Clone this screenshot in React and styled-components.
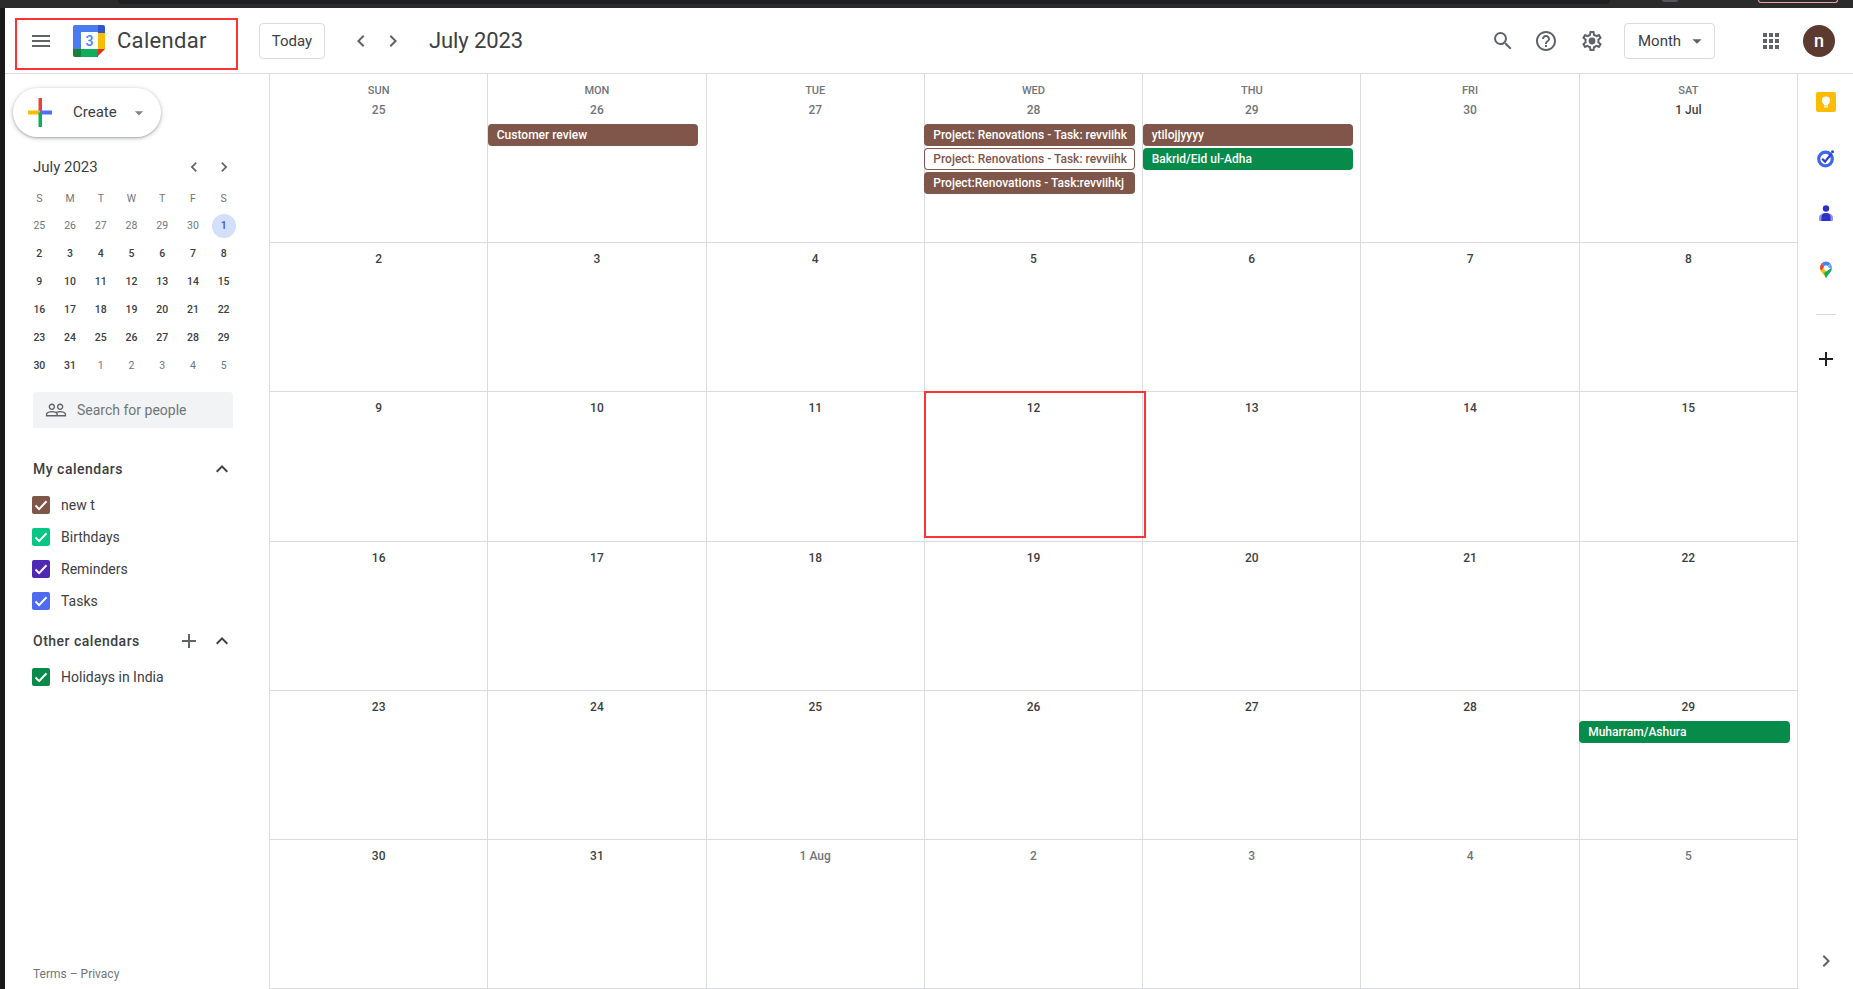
import React from 'react'
import styled, { createGlobalStyle } from 'styled-components'
import {
  MdMenu,
  MdChevronLeft,
  MdChevronRight,
  MdSearch,
  MdHelpOutline,
  MdApps,
  MdExpandLess,
  MdAdd,
  MdPeopleOutline,
  MdArrowDropDown,
} from 'react-icons/md'

const GlobalStyle = createGlobalStyle`
  html, body {
    margin: 0;
    padding: 0;
    height: 100%;
    background: #fff;
    overflow: hidden;
  }
  * { box-sizing: border-box; }
  body {
    font-family: Roboto, "Liberation Sans", sans-serif;
    color: #3c4043;
  }
`

const Page = styled.div`
  position: relative;
  width: 1853px;
  height: 989px;
  display: flex;
  flex-direction: column;
  overflow: hidden;
`

const TopStrip = styled.div`
  height: 8px;
  flex: none;
  background: #2b2b2b;
  display: flex;
  align-items: flex-start;
`

const StripTab = styled.div`
  margin-left: 118px;
  width: 1492px;
  height: 4px;
  background: #1f2022;
  border-radius: 0 0 8px 8px;
`

const StripDot = styled.div`
  margin-left: 52px;
  width: 16px;
  height: 2px;
  border-radius: 0 0 8px 8px;
  background: #55575a;
`

const StripPill = styled.div`
  margin-left: 80px;
  width: 80px;
  height: 3px;
  border: 1px solid #e8a0a0;
  border-top: none;
  border-radius: 0 0 6px 6px;
`

const Body = styled.div`
  flex: 1;
  min-height: 0;
  display: flex;
`

const LeftEdge = styled.div`
  width: 5px;
  flex: none;
  background: #1a1a1a;
`

const Main = styled.div`
  flex: 1;
  min-width: 0;
  display: flex;
  flex-direction: column;
`

const Header = styled.header`
  height: 66px;
  flex: none;
  border-bottom: 1px solid #dadce0;
  display: flex;
  align-items: center;
  padding: 0 18px 0 24px;
  color: #5f6368;
`

const Brand = styled.div`
  width: 230px;
  flex: none;
  display: flex;
  align-items: center;
`

const BrandName = styled.span`
  margin-left: 12px;
  font-size: 22px;
  letter-spacing: 0.3px;
  color: #3c4043;
`

const LogoWrap = styled.div`
  margin-left: 20px;
  width: 32px;
  height: 32px;
`

const OutlineButton = styled.div`
  height: 36px;
  border: 1px solid #dadce0;
  border-radius: 4px;
  display: flex;
  align-items: center;
  color: #3c4043;
`

const TodayButton = styled(OutlineButton)`
  width: 66px;
  padding-top: 1px;
  justify-content: center;
  font-size: 15px;
`

const MonthButton = styled(OutlineButton)`
  width: 91px;
  padding-left: 13px;
  gap: 5px;
  font-size: 15px;
`

const NavPair = styled.div`
  margin-left: 24px;
  display: flex;
  gap: 8px;
`

const MonthTitle = styled.div`
  margin-left: 24px;
  font-size: 22px;
  letter-spacing: -0.1px;
  color: #3c4043;
`

const HeaderRight = styled.div`
  margin-left: auto;
  display: flex;
  align-items: center;
  gap: 20px;
`

const HelpIcon = styled(MdHelpOutline)`
  margin: 0 2px 0 -1px;
`

const Apps = styled.div`
  margin-left: 24px;
  display: flex;
`

const Avatar = styled.div`
  width: 32px;
  height: 32px;
  border-radius: 50%;
  background: #5d3a2f;
  color: #fff;
  display: grid;
  place-items: center;
  font-size: 18px;
  font-weight: 500;
`

const Content = styled.div`
  flex: 1;
  min-height: 0;
  display: flex;
`

const Sidebar = styled.aside`
  width: 264px;
  flex: none;
  padding: 0 35px 0 28px;
  display: flex;
  flex-direction: column;
`

const CreateButton = styled.div`
  margin: 14px 0 0 -20px;
  width: 148px;
  height: 49px;
  flex: none;
  border-radius: 25px;
  background: #fff;
  box-shadow: 0 1px 2px rgba(60, 64, 67, 0.3), 0 1px 4px 1px rgba(60, 64, 67, 0.2);
  display: flex;
  align-items: center;
  padding-left: 15px;
  font-size: 15px;
  color: #3c4043;
`

const CreateLabel = styled.span`
  margin: 0 0 2px 21px;
`

const CreateCaret = styled.div`
  margin-left: 12px;
  display: flex;
  color: #80868b;
`

const MiniHead = styled.div`
  margin-top: 18px;
  height: 24px;
  flex: none;
  display: flex;
  align-items: center;
  justify-content: space-between;
`

const MiniTitle = styled.div`
  font-size: 15px;
  color: #3c4043;
`

const MiniNav = styled.div`
  display: flex;
  gap: 10px;
  color: #5f6368;
`

const MiniGrid = styled.div`
  margin: 6px -5px 0 -9px;
  display: grid;
  grid-template-columns: repeat(7, 1fr);
  grid-template-rows: 27px 27px;
  grid-auto-rows: 28px;
  flex: none;
`

const MiniCell = styled.div`
  display: grid;
  place-items: center;
  font-size: 10.5px;
  font-weight: ${(props) => (props.$muted ? 400 : 500)};
  color: ${(props) => (props.$today ? '#3b4fc4' : props.$muted ? '#70757a' : '#3c4043')};
`

const MiniToday = styled.span`
  width: 24px;
  height: 24px;
  border-radius: 50%;
  background: #d2e0fb;
  display: grid;
  place-items: center;
`

const PeopleSearch = styled.div`
  margin: 13px 1px 0 0;
  height: 36px;
  flex: none;
  background: #f1f3f4;
  border-radius: 4px 4px 0 0;
  display: flex;
  align-items: center;
  padding-left: 12px;
  gap: 10px;
  font-size: 14px;
  color: #70757a;
`

const SectionHead = styled.div`
  margin-top: ${(props) => props.$top}px;
  height: 24px;
  flex: none;
  display: flex;
  align-items: center;
  color: #3c4043;
`

const SectionTitle = styled.div`
  font-size: 14px;
  font-weight: 500;
  letter-spacing: 0.5px;
  margin-right: auto;
`

const SectionAdd = styled.div`
  display: flex;
  color: #5f6368;
  margin-right: 9px;
`

const CalendarList = styled.div`
  margin-top: 8px;
  flex: none;
`

const CalendarItem = styled.div`
  height: 32px;
  display: flex;
  align-items: center;
  gap: 11px;
  margin-left: -1px;
  font-size: 14px;
  color: #3c4043;
`

const Check = styled.span`
  width: 18px;
  height: 18px;
  border-radius: 2px;
  background: ${(props) => props.$color};
  display: grid;
  place-items: center;
`

const Terms = styled.div`
  margin-top: auto;
  padding-bottom: 7px;
  height: 23px;
  flex: none;
  font-size: 12px;
  line-height: 16px;
  color: #70757a;
`

const MonthGrid = styled.div`
  width: 1529px;
  flex: none;
  border-left: 1px solid #dadce0;
  display: grid;
  grid-template-columns: repeat(7, 1fr);
  grid-template-rows: 169px 149px 150px 149px 149px 149px;
`

const DayCell = styled.div`
  min-width: 0;
  border-right: 1px solid #dadce0;
  border-bottom: 1px solid #dadce0;
  padding-top: 8px;
  display: flex;
  flex-direction: column;
`

const DayName = styled.div`
  height: 16px;
  margin: 1px 0 3px;
  text-align: center;
  font-size: 11px;
  font-weight: 500;
  line-height: 16px;
  color: #70757a;
`

const DayNumber = styled.div`
  height: 16px;
  margin-bottom: 6px;
  text-align: center;
  font-size: 12px;
  font-weight: 500;
  line-height: 16px;
  color: ${(props) => (props.$muted ? '#70757a' : '#3c4043')};
`

const EventChip = styled.div`
  height: 22px;
  margin: 0 7.5px 2px -0.5px;
  padding-left: 9px;
  border-radius: 4px;
  font-size: 12px;
  font-weight: 500;
  line-height: 22px;
  white-space: nowrap;
  overflow: hidden;
  background: ${(props) => (props.$outlined ? '#fff' : props.$color)};
  color: ${(props) => (props.$outlined ? props.$color : '#fff')};
  box-shadow: ${(props) => (props.$outlined ? `inset 0 0 0 1px ${props.$color}` : 'none')};
`

const Rail = styled.aside`
  flex: 1;
  min-width: 0;
  padding: 18px 0 16px;
  display: flex;
  flex-direction: column;
  align-items: center;
`

const RailIcon = styled.div`
  width: 20px;
  height: 20px;
  margin-bottom: 36px;
`

const RailDivider = styled.div`
  width: 20px;
  height: 1px;
  margin: -2px 0 32px;
  background: #dadce0;
`

const RailPlus = styled.div`
  display: flex;
  color: #202124;
`

const RailCollapse = styled.div`
  margin-top: auto;
  display: flex;
  color: #5f6368;
`

/* the red boxes someone drew on the screenshot */
const Annotation = styled.div`
  position: absolute;
  left: ${(props) => props.$x}px;
  top: ${(props) => props.$y}px;
  width: ${(props) => props.$w}px;
  height: ${(props) => props.$h}px;
  border: 2px solid #ff3333;
  pointer-events: none;
`

const Logo = () => (
  <svg width="32" height="32" viewBox="0 0 32 32">
    <path d="M8 0h17v7H8z" fill="#4a7cf0" />
    <path d="M2 0h6v7H0V2a2 2 0 0 1 2-2z" fill="#4a7cf0" />
    <path d="M25 0h5a2 2 0 0 1 2 2v6h-7z" fill="#2f55c8" />
    <path d="M0 7h8v17H0z" fill="#4a7cf0" />
    <path d="M25 8h7v16h-7z" fill="#fbbc04" />
    <path d="M8 24h17v8H8z" fill="#0eaf5b" />
    <path d="M0 24h8v8H2a2 2 0 0 1-2-2z" fill="#188038" />
    <path d="M25 24h7l-8 8z" fill="#ea2b1f" />
    <rect x="8" y="7" width="17" height="17" fill="#fff" />
    <text x="16.5" y="21" textAnchor="middle" fontSize="14" fontWeight="500" fontFamily="Roboto, sans-serif" fill="#4285f4">3</text>
  </svg>
)

const CreatePlus = () => (
  <svg width="24" height="29" viewBox="0 0 24 29">
    <rect x="10.5" y="0" width="3.5" height="14.5" fill="#ea4335" />
    <rect x="0" y="12.5" width="12" height="4" fill="#fbbc04" />
    <rect x="12" y="12.5" width="12" height="4" fill="#4f6ff0" />
    <rect x="10.5" y="14.5" width="3.5" height="14.5" fill="#0eaf5b" />
  </svg>
)

const Gear = () => (
  <svg width="24" height="24" viewBox="0 0 24 24" fill="currentColor">
    <path d="M19.43 12.98c.04-.32.07-.64.07-.98 0-.34-.03-.66-.07-.98l2.11-1.65c.19-.15.24-.42.12-.64l-2-3.46c-.09-.16-.26-.25-.44-.25-.06 0-.12.01-.17.03l-2.49 1c-.52-.4-1.08-.73-1.69-.98l-.38-2.65C14.46 2.18 14.25 2 14 2h-4c-.25 0-.46.18-.49.42l-.38 2.65c-.61.25-1.17.59-1.69.98l-2.49-1c-.06-.02-.12-.03-.18-.03-.17 0-.34.09-.43.25l-2 3.46c-.13.22-.07.49.12.64l2.11 1.65c-.04.32-.07.65-.07.98 0 .33.03.66.07.98l-2.11 1.65c-.19.15-.24.42-.12.64l2 3.46c.09.16.26.25.44.25.06 0 .12-.01.17-.03l2.49-1c.52.4 1.08.73 1.69.98l.38 2.65c.03.24.24.42.49.42h4c.25 0 .46-.18.49-.42l.38-2.65c.61-.25 1.17-.59 1.69-.98l2.49 1c.06.02.12.03.18.03.17 0 .34-.09.43-.25l2-3.46c.12-.22.07-.49-.12-.64l-2.11-1.65zm-1.98-1.71c.04.31.05.52.05.73 0 .21-.02.43-.05.73l-.14 1.13.89.7 1.08.84-.7 1.21-1.27-.51-1.04-.42-.9.68c-.43.32-.84.56-1.25.73l-1.06.43-.16 1.13-.2 1.35h-1.4l-.19-1.35-.16-1.13-1.06-.43c-.43-.18-.83-.41-1.23-.71l-.91-.7-1.06.43-1.27.51-.7-1.21 1.08-.84.89-.7-.14-1.13c-.03-.31-.05-.54-.05-.74s.02-.43.05-.73l.14-1.13-.89-.7-1.08-.84.7-1.21 1.27.51 1.04.42.9-.68c.43-.32.84-.56 1.25-.73l1.06-.43.16-1.13.2-1.35h1.39l.19 1.35.16 1.13 1.06.43c.43.18.83.41 1.23.71l.91.7 1.06-.43 1.27-.51.7 1.21-1.07.85-.89.7.14 1.13z" />
    <circle cx="12" cy="12" r="3.4" />
  </svg>
)

const CheckMark = () => (
  <svg width="14" height="14" viewBox="0 0 14 14">
    <path d="M1.500 7.500l3.600 3.600L12.500 3.200" fill="none" stroke="#fff" strokeWidth="2" />
  </svg>
)

const KeepIcon = () => (
  <svg width="20" height="20" viewBox="0 0 20 20">
    <rect width="20" height="20" rx="2" fill="#fbbc04" />
    <circle cx="10" cy="8.600" r="4" fill="#fff" />
    <rect x="8" y="12" width="4" height="1.600" fill="#fff" />
    <rect x="8" y="14.300" width="4" height="1.200" fill="#fff" />
  </svg>
)

const TasksIcon = () => (
  <svg width="20" height="20" viewBox="0 0 20 20">
    <circle cx="9.500" cy="11" r="6.800" fill="none" stroke="#3f67ee" strokeWidth="3.200" />
    <path d="M6.200 10.800l2.800 2.800 6.500-7.800" fill="none" stroke="#2a3fd0" strokeWidth="2.200" />
    <circle cx="16.500" cy="3.800" r="1.500" fill="#2a3fd0" />
  </svg>
)

const ContactsIcon = () => (
  <svg width="20" height="20" viewBox="0 0 20 20">
    <circle cx="10" cy="4.500" r="3.200" fill="#2f2fc8" />
    <path d="M3 16v-2.500C3 10.800 6 9 10 9s7 1.800 7 4.500V16a1 1 0 0 1-1 1H4a1 1 0 0 1-1-1z" fill="#8c93ee" />
    <path d="M5.500 17v-4C5.500 10.500 7.500 9 10 9s4.500 1.500 4.500 4v4z" fill="#2f2fc8" />
  </svg>
)

const MapsIcon = () => (
  <svg width="20" height="20" viewBox="0 0 20 20">
    <path d="M10 18.500C9 15 4 12.500 4 7.500c0-.6.1-1.200.3-1.800L10 11z" fill="#fbbc04" />
    <path d="M10 18.500c1-3.500 6-6 6-11L8 13z" fill="#0eaf5b" />
    <path d="M5.700 3.300A6 6 0 0 0 4 7.500c0 1 .3 2 .8 3L8.500 7z" fill="#ea4335" />
    <path d="M5.700 3.300A6 6 0 0 1 14.400 3.400L11.500 6.500 8 6.500z" fill="#4285f4" />
    <path d="M14.400 3.400A6 6 0 0 1 16 7.500c0 .5-.1 1-.2 1.500L11.500 7z" fill="#6fa3f5" />
    <circle cx="10" cy="7.500" r="2.200" fill="#fff" />
  </svg>
)

const BROWN = '#80564a'
const GREEN = '#078b4a'

const MINI_WEEKS = [
  [25, 26, 27, 28, 29, 30, 1],
  [2, 3, 4, 5, 6, 7, 8],
  [9, 10, 11, 12, 13, 14, 15],
  [16, 17, 18, 19, 20, 21, 22],
  [23, 24, 25, 26, 27, 28, 29],
  [30, 31, 1, 2, 3, 4, 5],
]

const MY_CALENDARS = [
  { name: 'new t', color: BROWN },
  { name: 'Birthdays', color: '#05c684' },
  { name: 'Reminders', color: '#4f28b4' },
  { name: 'Tasks', color: '#4f6bf0' },
]

const DAY_NAMES = ['SUN', 'MON', 'TUE', 'WED', 'THU', 'FRI', 'SAT']

const EVENTS = {
  '0-1': [{ title: 'Customer review', color: BROWN }],
  '0-3': [
    { title: 'Project: Renovations - Task: revviihk', color: BROWN },
    { title: 'Project: Renovations - Task: revviihk', color: BROWN, outlined: true },
    { title: 'Project:Renovations - Task:revviihkj', color: BROWN },
  ],
  '0-4': [
    { title: 'ytilojjyyyy', color: BROWN },
    { title: 'Bakrid/Eid ul-Adha', color: GREEN },
  ],
  '4-6': [{ title: 'Muharram/Ashura', color: GREEN }],
}

const cellLabel = (week, day, value) => {
  if (week === 0 && value === 1) return '1 Jul'
  if (week === 5 && value === 1) return '1 Aug'
  return value
}

const isMuted = (week, value) => (week === 0 && value > 1) || (week === 5 && value < 20)

const App = () => {
  return (
    <Page>
      <GlobalStyle />
      <TopStrip>
        <StripTab />
        <StripDot />
        <StripPill />
      </TopStrip>
      <Body>
        <LeftEdge />
        <Main>
          <Header>
            <Brand>
              <MdMenu size={24} />
              <LogoWrap><Logo /></LogoWrap>
              <BrandName>Calendar</BrandName>
            </Brand>
            <TodayButton>Today</TodayButton>
            <NavPair>
              <MdChevronLeft size={24} />
              <MdChevronRight size={24} />
            </NavPair>
            <MonthTitle>July 2023</MonthTitle>
            <HeaderRight>
              <MdSearch size={24} />
              <HelpIcon size={24} />
              <Gear />
              <MonthButton>Month <MdArrowDropDown size={22} color="#5f6368" /></MonthButton>
              <Apps><MdApps size={24} /></Apps>
              <Avatar>n</Avatar>
            </HeaderRight>
          </Header>
          <Content>
            <Sidebar>
              <CreateButton>
                <CreatePlus />
                <CreateLabel>Create</CreateLabel>
                <CreateCaret><MdArrowDropDown size={20} /></CreateCaret>
              </CreateButton>
              <MiniHead>
                <MiniTitle>July 2023</MiniTitle>
                <MiniNav>
                  <MdChevronLeft size={20} />
                  <MdChevronRight size={20} />
                </MiniNav>
              </MiniHead>
              <MiniGrid>
                {['S', 'M', 'T', 'W', 'T', 'F', 'S'].map((d, i) => (
                  <MiniCell key={i} $muted>{d}</MiniCell>
                ))}
                {MINI_WEEKS.map((week, w) =>
                  week.map((val, d) => {
                    const today = w === 0 && val === 1
                    return (
                      <MiniCell key={`${w}-${d}`} $muted={isMuted(w, val)} $today={today}>
                        {today ? <MiniToday>{val}</MiniToday> : val}
                      </MiniCell>
                    )
                  })
                )}
              </MiniGrid>
              <PeopleSearch>
                <MdPeopleOutline size={22} color="#5f6368" />
                Search for people
              </PeopleSearch>
              <SectionHead $top={29}>
                <SectionTitle>My calendars</SectionTitle>
                <MdExpandLess size={24} />
              </SectionHead>
              <CalendarList>
                {MY_CALENDARS.map((cal) => (
                  <CalendarItem key={cal.name}>
                    <Check $color={cal.color}><CheckMark /></Check>
                    {cal.name}
                  </CalendarItem>
                ))}
              </CalendarList>
              <SectionHead $top={12}>
                <SectionTitle>Other calendars</SectionTitle>
                <SectionAdd><MdAdd size={24} /></SectionAdd>
                <MdExpandLess size={24} />
              </SectionHead>
              <CalendarList>
                <CalendarItem>
                  <Check $color={GREEN}><CheckMark /></Check>
                  Holidays in India
                </CalendarItem>
              </CalendarList>
              <Terms>Terms – Privacy</Terms>
            </Sidebar>
            <MonthGrid>
              {MINI_WEEKS.map((week, w) =>
                week.map((val, d) => (
                  <DayCell key={`${w}-${d}`}>
                    {w === 0 && <DayName>{DAY_NAMES[d]}</DayName>}
                    <DayNumber $muted={isMuted(w, val)}>{cellLabel(w, d, val)}</DayNumber>
                    {(EVENTS[`${w}-${d}`] || []).map((ev, i) => (
                      <EventChip key={i} $color={ev.color} $outlined={ev.outlined}>{ev.title}</EventChip>
                    ))}
                  </DayCell>
                ))
              )}
            </MonthGrid>
            <Rail>
              <RailIcon><KeepIcon /></RailIcon>
              <RailIcon><TasksIcon /></RailIcon>
              <RailIcon><ContactsIcon /></RailIcon>
              <RailIcon><MapsIcon /></RailIcon>
              <RailDivider />
              <RailPlus><MdAdd size={24} /></RailPlus>
              <RailCollapse><MdChevronRight size={24} /></RailCollapse>
            </Rail>
          </Content>
        </Main>
      </Body>
      <Annotation $x={15} $y={18} $w={223} $h={52} />
      <Annotation $x={924} $y={391} $w={222} $h={147} />
    </Page>
  )
}

export default App
